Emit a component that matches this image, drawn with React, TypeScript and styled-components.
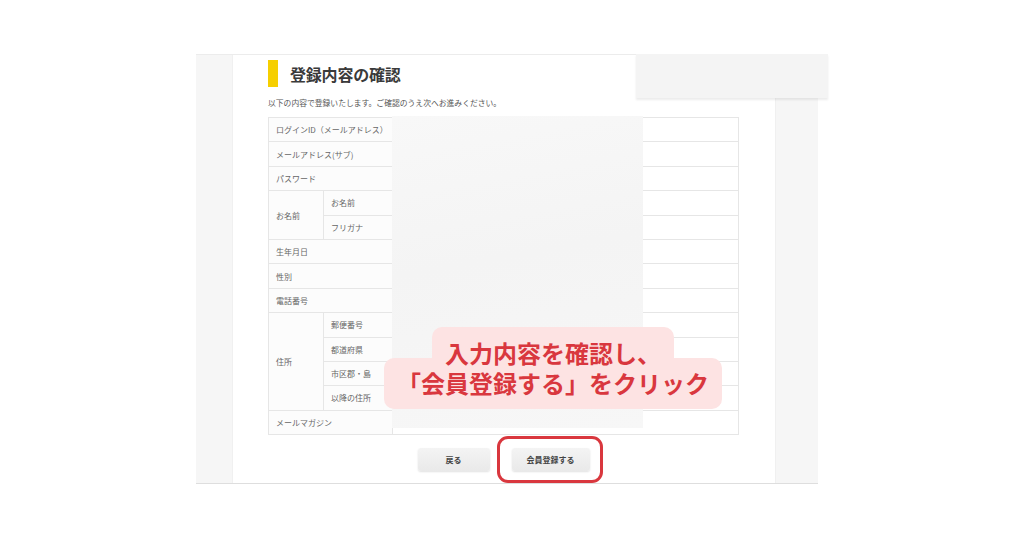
import styled, { createGlobalStyle } from "styled-components";

const GlobalStyle = createGlobalStyle`
  html, body {
    margin: 0;
    padding: 0;
    background: #ffffff;
  }
  body {
    font-family: "Noto Sans CJK JP", "Noto Sans", sans-serif;
    color: #333;
  }
`;

type Row = {
  group?: string;
  span?: number;
  label: string;
};

const rows: Row[] = [
  { label: "ログインID（メールアドレス）" },
  { label: "メールアドレス(サブ)" },
  { label: "パスワード" },
  { group: "お名前", span: 2, label: "お名前" },
  { group: "", label: "フリガナ" },
  { label: "生年月日" },
  { label: "性別" },
  { label: "電話番号" },
  { group: "住所", span: 4, label: "郵便番号" },
  { group: "", label: "都道府県" },
  { group: "", label: "市区郡・島" },
  { group: "", label: "以降の住所" },
  { label: "メールマガジン" },
];

export default function App() {
  return (
    <>
      <GlobalStyle />
      <Page>
        <Frame>
          <SideStrip />
          <Main>
            <TitleRow>
              <TitleBar />
              <Title>登録内容の確認</Title>
            </TitleRow>
            <Lead>以下の内容で登録いたします。ご確認のうえ次へお進みください。</Lead>
            <TableWrap>
              <ConfirmTable>
                <colgroup>
                  <col style={{ width: 55 }} />
                  <col style={{ width: 69 }} />
                  <col />
                </colgroup>
                <tbody>
                  {rows.map((row, i) => (
                    <tr key={i}>
                      {row.group === undefined ? (
                        <LabelCell colSpan={2}>{row.label}</LabelCell>
                      ) : (
                        <>
                          {row.span && (
                            <LabelCell rowSpan={row.span}>{row.group}</LabelCell>
                          )}
                          <LabelCell>{row.label}</LabelCell>
                        </>
                      )}
                      <ValueCell />
                    </tr>
                  ))}
                </tbody>
              </ConfirmTable>
              <Mask />
              <Callout>
                <CalloutLine $first>
                  <CalloutText>入力内容を確認し、</CalloutText>
                </CalloutLine>
                <CalloutLine>
                  <CalloutText>「会員登録する」をクリック</CalloutText>
                </CalloutLine>
              </Callout>
            </TableWrap>
            <Actions>
              <Button $width={72}>戻る</Button>
              <Highlighted>
                <Button $width={78}>会員登録する</Button>
              </Highlighted>
            </Actions>
          </Main>
          <SideStrip $right />
        </Frame>
        <HeaderBox />
      </Page>
    </>
  );
}

const Page = styled.div`
  position: relative;
  width: 1024px;
  height: 538px;
  padding: 54px 0 0 196px;
  box-sizing: border-box;
  overflow: hidden;
`;

const Frame = styled.div`
  display: flex;
  width: 622px;
  height: 430px;
  border-top: 1px solid #ececec;
  border-bottom: 1px solid #dedede;
  box-sizing: border-box;
`;

const SideStrip = styled.div<{ $right?: boolean }>`
  width: ${({ $right }) => ($right ? "43px" : "37px")};
  flex-shrink: 0;
  background: #f6f6f6;
  border-${({ $right }) => ($right ? "left" : "right")}: 1px solid #f0f0f0;
  box-sizing: border-box;
`;

const Main = styled.div`
  flex: 1;
  background: #ffffff;
  padding: 5px 36px 0 35px;
  display: flex;
  flex-direction: column;
`;

const TitleRow = styled.div`
  display: flex;
  align-items: center;
  height: 27px;
`;

const TitleBar = styled.div`
  width: 10px;
  height: 27px;
  background: #f6cf00;
`;

const Title = styled.h1`
  margin: 0 0 0 12px;
  font-size: 16px;
  font-weight: 700;
  color: #3a3a3a;
  letter-spacing: -0.2px;
`;

const Lead = styled.p`
  margin: 11px 0 0;
  font-size: 7.8px;
  line-height: 10px;
  color: #555;
`;

const TableWrap = styled.div`
  position: relative;
  margin-top: 9px;
`;

const ConfirmTable = styled.table`
  width: 471px;
  border-collapse: collapse;
  table-layout: fixed;

  td {
    height: 24.4px;
    padding: 0;
    border: 1px solid #e6e6e6;
    box-sizing: border-box;
  }
`;

const LabelCell = styled.td`
  background: #fcfcfc;
  font-size: 8px;
  color: #666;
  padding-left: 7px !important;
  white-space: nowrap;
`;

const ValueCell = styled.td`
  background: #ffffff;
`;

const Mask = styled.div`
  position: absolute;
  left: 124px;
  top: -1px;
  width: 251px;
  height: 312px;
  background: linear-gradient(170deg, #f8f8f8 0%, #f4f4f4 45%, #f7f7f7 100%);
`;

const Callout = styled.div`
  position: absolute;
  left: 285px;
  top: 210px;
  transform: translateX(-50%);
  display: flex;
  flex-direction: column;
  align-items: center;
  white-space: nowrap;
  font-size: 24px;
  font-weight: 700;
  line-height: 28px;
  color: #d9373e;
`;

/* each line gets its own pink pill; the first one reaches down behind the second */
const CalloutLine = styled.div<{ $first?: boolean }>`
  position: relative;
  padding: ${({ $first }) => ($first ? "11.5px 13px 0" : "2.5px 13px 11.5px")};

  &::before {
    content: "";
    position: absolute;
    left: 0;
    right: 0;
    top: ${({ $first }) => ($first ? "0" : "-9px")};
    bottom: ${({ $first }) => ($first ? "-11.5px" : "0")};
    background: #fde3e3;
    border-radius: 10px;
  }
`;

const CalloutText = styled.span`
  position: relative;
  z-index: 1;
  display: block;
  height: 28px;
`;

const Actions = styled.div`
  display: flex;
  justify-content: center;
  gap: 22px;
  margin-top: 13px;
`;

const Button = styled.div<{ $width: number }>`
  width: ${({ $width }) => $width}px;
  height: 23px;
  display: flex;
  align-items: center;
  justify-content: center;
  border-radius: 3px;
  background: linear-gradient(#f4f4f4, #e9e9e9);
  box-shadow: 0 1px 2px rgba(0, 0, 0, 0.12);
  font-size: 8px;
  font-weight: 700;
  color: #444;
`;

const Highlighted = styled.div`
  position: relative;

  &::after {
    content: "";
    position: absolute;
    inset: -12px -13px -12px -15px;
    border: 3px solid #d9373e;
    border-radius: 11px;
  }
`;

const HeaderBox = styled.div`
  position: absolute;
  left: 636px;
  top: 54px;
  width: 192px;
  height: 44px;
  background: #f4f4f4;
  box-shadow: 0 2px 2px rgba(0, 0, 0, 0.08);
`;
